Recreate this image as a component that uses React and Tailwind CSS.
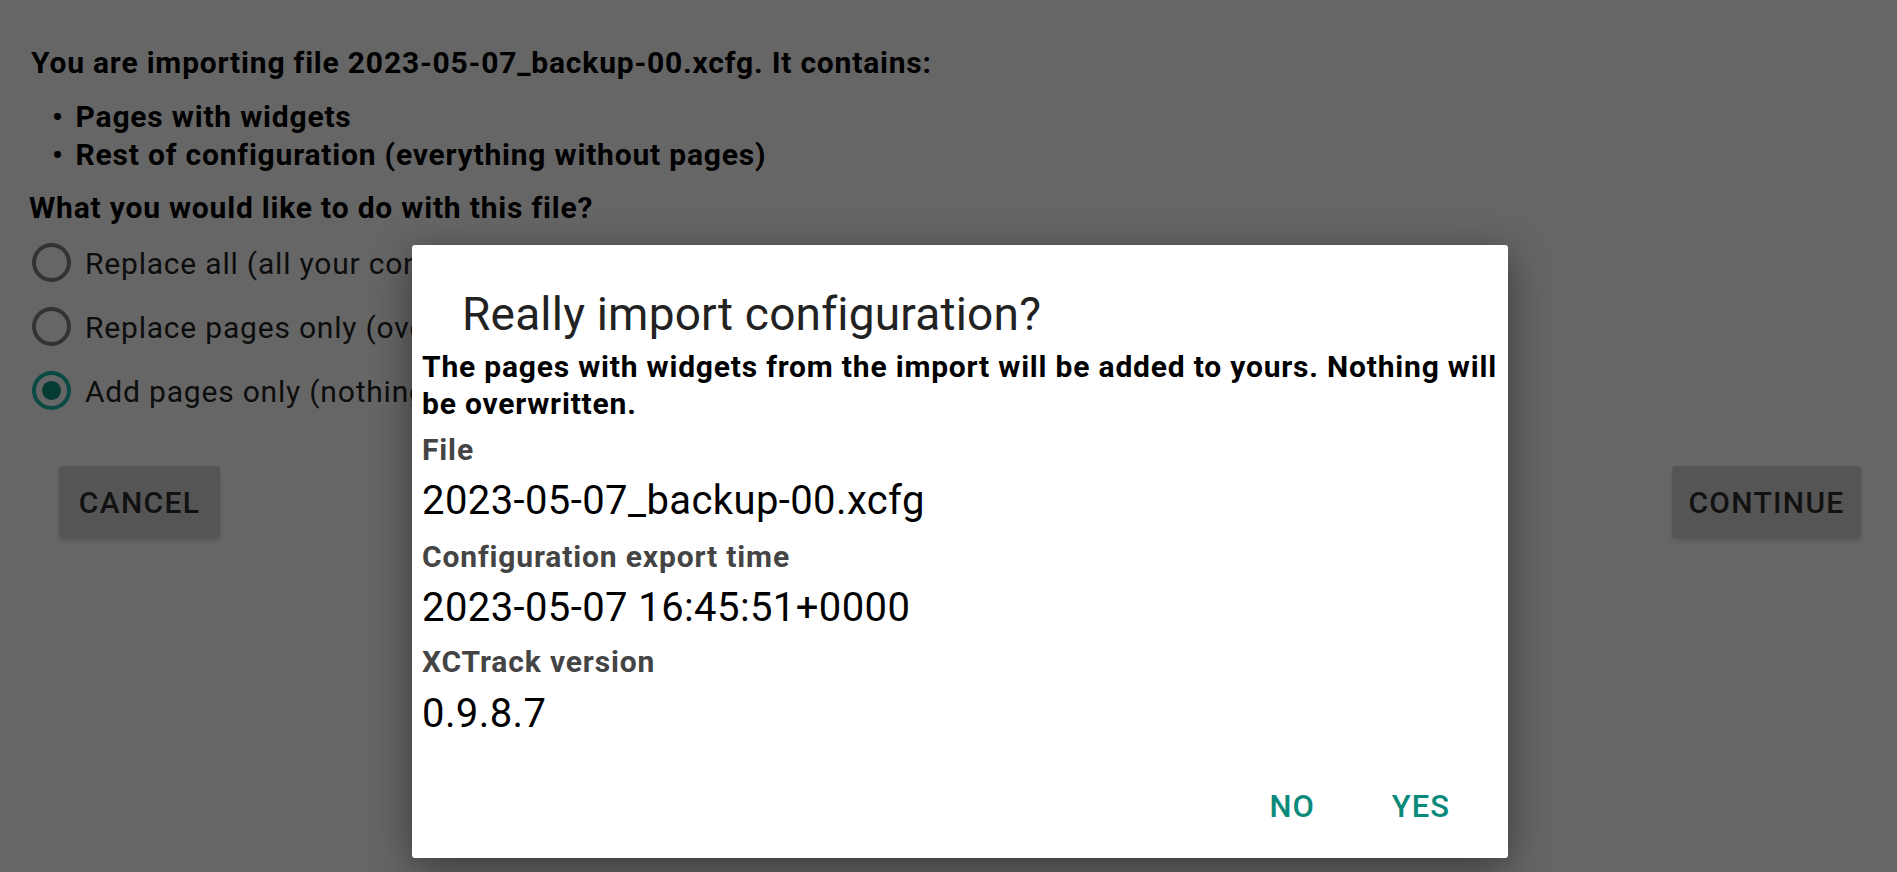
const font = { fontFamily: "Roboto, 'Liberation Sans', sans-serif" };

const options = [
  { label: "Replace all (all your configuration will be overwritten)", checked: false },
  { label: "Replace pages only (overwrite your pages with imported ones)", checked: false },
  { label: "Add pages only (nothing will be overwritten)", checked: true },
];

const Radio = ({ checked }) => (
  <div
    className={
      "size-[39px] rounded-full border-[4px] flex items-center justify-center shrink-0 " +
      (checked ? "border-[#0b4a42]" : "border-[#333333]")
    }
  >
    {checked && <div className="size-[19px] rounded-full bg-[#053b33]" />}
  </div>
);

const Field = ({ label, value, labelTop, valueTop }) => (
  <div>
    <div
      className="text-[30px] leading-[34px] font-bold tracking-[0.85px] text-[#444444]"
      style={{ marginTop: labelTop }}
    >
      {label}
    </div>
    <div
      className="text-[40px] leading-[48px] tracking-[0.4px] text-black"
      style={{ marginTop: valueTop }}
    >
      {value}
    </div>
  </div>
);

export default function App() {
  return (
    <div className="relative w-full h-[872px] bg-[#666666] overflow-hidden" style={font}>
      {/* Background screen (dimmed) */}
      <div className="pt-[46px]">
        <p className="pl-[31px] text-[30px] leading-[34px] font-bold tracking-[0.8px] text-black">
          You are importing file 2023-05-07_backup-00.xcfg. It contains:
        </p>
        <ul className="mt-[18px] pl-[52px] text-[30px] leading-[38px] font-bold tracking-[0.8px] text-black">
          <li className="flex gap-[12px]">
            <span>•</span>
            <span>Pages with widgets</span>
          </li>
          <li className="flex gap-[12px]">
            <span>•</span>
            <span>Rest of configuration (everything without pages)</span>
          </li>
        </ul>
        <p className="mt-[17px] pl-[29px] text-[30px] leading-[34px] font-bold tracking-[0.8px] text-black">
          What you would like to do with this file?
        </p>
        <div className="mt-[5px] pl-[32px]">
          {options.map((o) => (
            <div key={o.label} className="h-[64px] flex items-center gap-[14px]">
              <Radio checked={o.checked} />
              <span className="text-[30px] leading-[38px] tracking-[0.8px] text-[#0d0d0d] pt-[3px] whitespace-nowrap">
                {o.label}
              </span>
            </div>
          ))}
        </div>
        <div className="mt-[44px] flex justify-between pl-[59px] pr-[36px]">
          <button className="w-[161px] h-[72px] rounded-[4px] bg-[#555555] shadow-md text-[30px] font-medium tracking-[1.3px] text-[#111111]">
            CANCEL
          </button>
          <button className="w-[189px] h-[72px] rounded-[4px] bg-[#555555] shadow-md text-[30px] font-medium tracking-[1.3px] text-[#111111]">
            CONTINUE
          </button>
        </div>
      </div>

      {/* Dialog */}
      <div className="absolute left-[412px] top-[245px] w-[1096px] h-[613px] bg-white rounded-[3px] shadow-[0_10px_40px_rgba(0,0,0,0.45)] flex flex-col">
        <h2 className="pt-[41px] pl-[50px] text-[46px] leading-[56px] tracking-[0.2px] text-[#222222]">
          Really import configuration?
        </h2>
        <div className="pl-[10px] pr-[4px]">
          <p className="mt-[6px] text-[30px] leading-[37px] font-bold tracking-[0.8px] text-black">
            The pages with widgets from the import will be added to yours. Nothing will be overwritten.
          </p>
          <Field label="File" value="2023-05-07_backup-00.xcfg" labelTop="11px" valueTop="10px" />
          <Field
            label="Configuration export time"
            value="2023-05-07 16:45:51+0000"
            labelTop="15px"
            valueTop="10px"
          />
          <Field label="XCTrack version" value="0.9.8.7" labelTop="13px" valueTop="11px" />
        </div>
        <div className="mt-auto pb-[33px] pr-[58px] flex justify-end gap-[77px]">
          <button className="text-[31px] leading-[36px] font-medium text-[#0a8a7a] tracking-[1px]">NO</button>
          <button className="text-[31px] leading-[36px] font-medium text-[#0a8a7a] tracking-[1px]">YES</button>
        </div>
      </div>
    </div>
  );
}
